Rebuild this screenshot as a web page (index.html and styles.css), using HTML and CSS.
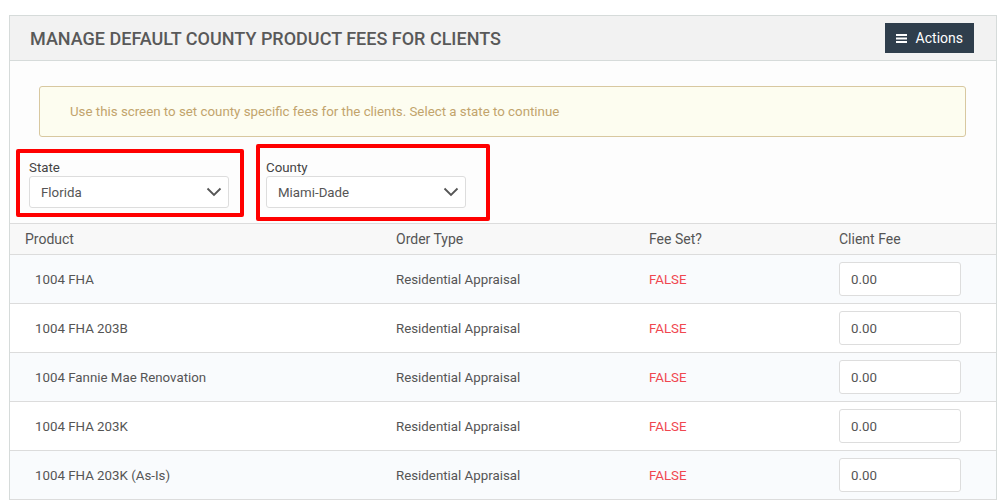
FILE: index.html
```html
<!DOCTYPE html>
<html lang="en">
<head>
    <meta charset="UTF-8">
    <title>Manage Default County Product Fees</title>
    <link rel="stylesheet" href="styles.css">
</head>
<body>
    <div class="page">
        <div class="panel">
            <div class="panel-heading">
                <h1>Manage Default County Product Fees for Clients</h1>
                <button class="actions-btn">
                    <svg width="11" height="10" viewBox="0 0 11 10"><rect x="0" y="1" width="11" height="2" fill="#fff"/><rect x="0" y="4.5" width="11" height="2" fill="#fff"/><rect x="0" y="8" width="11" height="2" fill="#fff"/></svg>
                    Actions
                </button>
            </div>

            <div class="panel-body">
                <div class="alert">Use this screen to set county specific fees for the clients. Select a state to continue</div>

                <div class="filters">
                    <div class="field">
                        <span class="mark mark-state"></span>
                        <label>State</label>
                        <div class="select">
                            <span>Florida</span>
                            <svg width="16" height="10" viewBox="0 0 16 10"><path d="M1.5 1.5 L8 8 L14.5 1.5" fill="none" stroke="#555" stroke-width="1.8"/></svg>
                        </div>
                    </div>
                    <div class="field">
                        <span class="mark mark-county"></span>
                        <label>County</label>
                        <div class="select">
                            <span>Miami-Dade</span>
                            <svg width="16" height="10" viewBox="0 0 16 10"><path d="M1.5 1.5 L8 8 L14.5 1.5" fill="none" stroke="#555" stroke-width="1.8"/></svg>
                        </div>
                    </div>
                </div>
            </div>

            <table class="fees">
                <thead>
                    <tr>
                        <th class="col-product">Product</th>
                        <th class="col-type">Order Type</th>
                        <th class="col-set">Fee Set?</th>
                        <th>Client Fee</th>
                    </tr>
                </thead>
                <tbody>
                    <tr>
                        <td class="name">1004 FHA</td>
                        <td>Residential Appraisal</td>
                        <td class="false">FALSE</td>
                        <td><input type="text" value="0.00"></td>
                    </tr>
                    <tr>
                        <td class="name">1004 FHA 203B</td>
                        <td>Residential Appraisal</td>
                        <td class="false">FALSE</td>
                        <td><input type="text" value="0.00"></td>
                    </tr>
                    <tr>
                        <td class="name">1004 Fannie Mae Renovation</td>
                        <td>Residential Appraisal</td>
                        <td class="false">FALSE</td>
                        <td><input type="text" value="0.00"></td>
                    </tr>
                    <tr>
                        <td class="name">1004 FHA 203K</td>
                        <td>Residential Appraisal</td>
                        <td class="false">FALSE</td>
                        <td><input type="text" value="0.00"></td>
                    </tr>
                    <tr>
                        <td class="name">1004 FHA 203K (As-Is)</td>
                        <td>Residential Appraisal</td>
                        <td class="false">FALSE</td>
                        <td><input type="text" value="0.00"></td>
                    </tr>
                </tbody>
            </table>
        </div>
    </div>
</body>
</html>
```

FILE: styles.css
```css
body {
    margin: 0;
    font-family: Roboto, "Liberation Sans", sans-serif;
    background-color: #fff;
    color: #555;
}

.page {
    padding: 15px 11px 0 9px;
}

.panel {
    border: 1px solid #d6dbda;
    background-color: #fdfdfd;
}

.panel-heading {
    display: flex;
    justify-content: space-between;
    align-items: center;
    height: 44px;
    padding: 0 22px 0 20px;
    background-color: #f2f2f2;
    border-bottom: 1px solid #d6dbda;
}

.panel-heading h1 {
    margin: 0;
    font-size: 18px;
    font-weight: 500;
    text-transform: uppercase;
    color: #595959;
}

.actions-btn {
    display: flex;
    align-items: center;
    gap: 9px;
    height: 30px;
    padding: 0 11px;
    background-color: #2f3e4c;
    color: #fff;
    border: none;
    font-family: inherit;
    font-size: 14px;
}

.panel-body {
    padding: 25px 30px 15px 29px;
}

.alert {
    height: 49px;
    display: flex;
    align-items: center;
    padding: 0 30px;
    background-color: #fdfdf0;
    border: 1px solid #d8c8a0;
    border-radius: 3px;
    color: #c2a46c;
    font-size: 13.3px;
}

.filters {
    display: flex;
    gap: 37px;
    margin-top: 23px;
    margin-left: -10px;
}

.field {
    position: relative;
    width: 200px;
}

.field label {
    display: block;
    font-size: 13.3px;
    color: #444;
    line-height: 16px;
    margin-bottom: 0;
}

.select {
    display: flex;
    justify-content: space-between;
    align-items: center;
    height: 30px;
    padding: 0 6px 0 11px;
    border: 1px solid #ddd;
    border-radius: 3px;
    background-color: #fff;
    font-size: 13.3px;
    color: #555;
}

.mark {
    position: absolute;
    border: 4px solid #f00;
    border-radius: 2px;
}

.mark-state {
    left: -13px;
    top: -11px;
    width: 220px;
    height: 60px;
}

.mark-county {
    left: -10px;
    top: -16px;
    width: 226px;
    height: 69px;
}

.fees {
    width: 100%;
    border-collapse: collapse;
    font-size: 13.3px;
}

.fees th {
    text-align: left;
    font-weight: 400;
    font-size: 14px;
    color: #555;
    height: 30px;
    padding: 0 0 0 15px;
    background-color: #f8f8f8;
    border-top: 1px solid #dcdcdc;
    border-bottom: 1px solid #dcdcdc;
}

.col-product {
    width: 356px;
}

.col-type {
    width: 238px;
}

.col-set {
    width: 175px;
}

.fees td {
    height: 48px;
    padding: 0 0 0 15px;
    border-bottom: 1px solid #dcdcdc;
    color: #555;
}

.fees td.name {
    padding-left: 25px;
}

.fees tbody tr:nth-child(odd) {
    background-color: #f9fbfd;
}

.fees tbody tr:nth-child(even) {
    background-color: #fff;
}

.fees td.false {
    color: #f0474f;
}

.fees input {
    width: 122px;
    height: 34px;
    box-sizing: border-box;
    padding: 0 11px;
    border: 1px solid #ddd;
    border-radius: 3px;
    font-family: inherit;
    font-size: 13.3px;
    color: #555;
}
```
